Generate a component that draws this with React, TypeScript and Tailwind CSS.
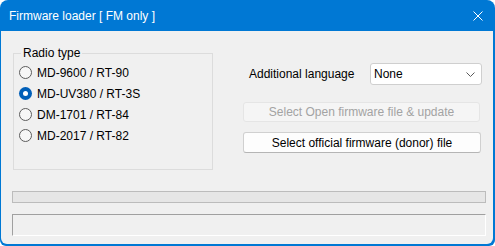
import React from 'react'

const radios = ['MD-9600 / RT-90', 'MD-UV380 / RT-3S', 'DM-1701 / RT-84', 'MD-2017 / RT-82']

export default function App() {
  return (
    <div className="w-[495px] h-[246px] bg-[#0078d4] rounded-t-lg rounded-b-md overflow-hidden flex flex-col font-['Liberation_Sans',Arial,sans-serif] text-[12px] text-black">
      {/* Title bar */}
      <div className="h-[31px] shrink-0 flex items-center pl-[9px] pr-[12px] text-white">
        <span className="leading-none">Firmware loader [ FM only ]</span>
        <svg className="ml-auto" width="10" height="10" viewBox="0 0 10 10">
          <path d="M0.5 0.5 L9.5 9.5 M9.5 0.5 L0.5 9.5" stroke="#fff" strokeWidth="1" fill="none" />
        </svg>
      </div>

      {/* Body */}
      <div className="flex-1 bg-[#f0f0f0] ml-[1px] mr-[2px] mb-[2px] rounded-b-md pl-[11px] pt-[22px]">
        <div className="flex items-start">
          {/* Radio group */}
          <div className="relative ml-[1px] w-[200px] h-[117px] border border-[#dcdcdc] pt-[8px] pl-[5px]">
            <span className="absolute left-[7px] top-[-8px] px-[2px] bg-[#f0f0f0] leading-[14px]">Radio type</span>
            {radios.map((r, i) => (
              <div key={r} className="h-[21px] flex items-center gap-[5px]">
                {i === 1 ? (
                  <span className="w-[13px] h-[13px] rounded-full bg-[#005fb8] flex items-center justify-center">
                    <span className="w-[5px] h-[5px] rounded-full bg-white" />
                  </span>
                ) : (
                  <span className="w-[13px] h-[13px] rounded-full border border-[#5c5c5c] bg-[#f7f7f7]" />
                )}
                <span className="leading-none">{r}</span>
              </div>
            ))}
          </div>

          {/* Right column */}
          <div className="ml-[30px] mt-[10px] w-[239px] flex flex-col">
            <div className="h-[22px] flex items-center">
              <span className="pl-[6px]">Additional language</span>
              <div className="ml-auto w-[112px] h-[22px] bg-white border border-[#cfcfcf] rounded-[3px] flex items-center pl-[3px] pr-[6px]">
                <span>None</span>
                <svg className="ml-auto" width="9" height="5" viewBox="0 0 9 5">
                  <path d="M0.5 0.5 L4.5 4.5 L8.5 0.5" stroke="#5a5a5a" strokeWidth="1" fill="none" />
                </svg>
              </div>
            </div>
            <div className="mt-[17px] w-[237px] h-[20px] bg-[#f5f5f5] border border-[#e5e5e5] rounded-[3px] flex items-center justify-center text-[#a3a3a3]">
              Select Open firmware file &amp; update
            </div>
            <div className="mt-[10px] w-[238px] h-[21px] bg-[#fdfdfd] border border-[#d0d0d0] border-b-[#b5b5b5] rounded-[3px] flex items-center justify-center">
              Select official firmware (donor) file
            </div>
          </div>
        </div>

        {/* Progress bar */}
        <div className="mt-[21px] w-[474px] h-[12px] bg-[#e6e6e6] border border-[#bcbcbc]" />

        {/* Status box */}
        <div className="mt-[11px] w-[474px] h-[22px] border border-t-[#a0a0a0] border-l-[#a0a0a0] border-r-white border-b-white" />
      </div>
    </div>
  )
}
